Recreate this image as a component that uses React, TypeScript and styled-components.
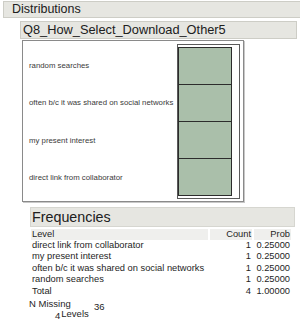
import React from 'react'
import styled, { createGlobalStyle } from 'styled-components'

const GlobalStyle = createGlobalStyle`
  html, body {
    margin: 0;
    padding: 0;
    background: #fff;
    overflow: hidden;
  }
  body {
    font-family: 'Liberation Sans', Arial, sans-serif;
    color: #1e1e1e;
  }
`

const levels = [
  { name: 'direct link from collaborator', count: 1, prob: '0.25000' },
  { name: 'my present interest', count: 1, prob: '0.25000' },
  { name: 'often b/c it was shared on social networks', count: 1, prob: '0.25000' },
  { name: 'random searches', count: 1, prob: '0.25000' },
]

const App: React.FC = () => {
  const plotLevels = [...levels].reverse()

  return (
    <Page>
      <GlobalStyle />
      <OutlineHeader>Distributions</OutlineHeader>
      <OutlineBody>
        <SubHeader>Q8_How_Select_Download_Other5</SubHeader>
        <PlotFrame>
          <AxisLabels>
            {plotLevels.map(l => (
              <AxisLabel key={l.name}>{l.name}</AxisLabel>
            ))}
          </AxisLabels>
          <BarBox>
            <BarStack>
              {plotLevels.map(l => (
                <Bar key={l.name} />
              ))}
            </BarStack>
          </BarBox>
        </PlotFrame>

        <FreqSection>
          <FreqHeader>Frequencies</FreqHeader>
          <FreqTable>
            <thead>
              <tr>
                <HeadCell>Level</HeadCell>
                <HeadCell align="right">Count</HeadCell>
                <HeadCell align="right">Prob</HeadCell>
              </tr>
            </thead>
            <tbody>
              {levels.map(l => (
                <tr key={l.name}>
                  <Cell>{l.name}</Cell>
                  <Cell align="right">{l.count}</Cell>
                  <Cell align="right">{l.prob}</Cell>
                </tr>
              ))}
              <tr>
                <Cell>Total</Cell>
                <Cell align="right">4</Cell>
                <Cell align="right">1.00000</Cell>
              </tr>
            </tbody>
          </FreqTable>
          <Summary>
            <SummaryRow>
              <SummaryLabel>N Missing</SummaryLabel>
              <SummaryValue $drop={3}>36</SummaryValue>
            </SummaryRow>
            <SummaryRow $indent={26}>
              <SummaryValue $drop={2}>4</SummaryValue>
              <span>Levels</span>
            </SummaryRow>
          </Summary>
        </FreqSection>
      </OutlineBody>
    </Page>
  )
}

export default App

const Page = styled.div`
  width: 300px;
  height: 324px;
  padding: 1px 0 0 3px;
  box-sizing: border-box;
`
const OutlineHeader = styled.div`
  width: 305px;
  height: 17px;
  box-sizing: border-box;
  background: #e6e6e1;
  border: 1px solid #cdcdc6;
  padding-left: 8px;
  font-size: 12.5px;
  line-height: 15px;
  color: #202020;
`
const OutlineBody = styled.div`
  margin-top: 3px;
  padding-left: 17px;
`
const SubHeader = styled.div`
  width: 277px;
  height: 18px;
  box-sizing: border-box;
  background: #e6e6e1;
  border: 1px solid #cdcdc6;
  padding-left: 2px;
  font-size: 12.8px;
  line-height: 16px;
  color: #202020;
`
const PlotFrame = styled.div`
  margin: 1px 0 0 2px;
  width: 222px;
  height: 162px;
  box-sizing: border-box;
  border: 1px solid #8a8a8a;
  box-shadow: 1px 1px 0 #c8c8c8;
  display: flex;
  padding: 3px 3px 2px 0;
`
const AxisLabels = styled.div`
  flex: 1;
  display: flex;
  flex-direction: column;
  padding: 3px 0 3px 6px;
`
const AxisLabel = styled.div`
  flex: 1;
  display: flex;
  align-items: center;
  font-size: 7.8px;
  color: #3a3a3a;
  white-space: nowrap;
`
const BarBox = styled.div`
  width: 63px;
  box-sizing: border-box;
  border: 1px solid #5a5a5a;
  padding: 2px 7px 2px 0;
  display: flex;
`
const BarStack = styled.div`
  flex: 1;
  display: flex;
  flex-direction: column;
  border: 1px solid #2c2c2c;
  border-bottom: none;
`
const Bar = styled.div`
  flex: 1;
  background: #aabfaa;
  border-bottom: 1px solid #2c2c2c;
`
const FreqSection = styled.div`
  margin: 5px 0 0 10px;
`
const FreqHeader = styled.div`
  width: 265px;
  height: 20px;
  box-sizing: border-box;
  background: #e6e6e1;
  border: 1px solid #d6d6d0;
  padding-left: 1px;
  font-size: 14.3px;
  line-height: 18px;
  color: #202020;
`
const FreqTable = styled.table`
  margin: 2px 0 0 -1px;
  border-collapse: separate;
  border-spacing: 2px 0;
  font-size: 9.3px;
  color: #1e1e1e;
  table-layout: fixed;
  width: 262px;

  td:nth-child(1), th:nth-child(1) { width: 175px; }
  td:nth-child(2), th:nth-child(2) { width: 40px; }
  td:nth-child(3), th:nth-child(3) { width: 35px; }
`
const HeadCell = styled.th<{ align?: string }>`
  background: #efefed;
  font-weight: normal;
  text-align: ${p => p.align || 'left'};
  padding: 0 1px;
  height: 11px;
  line-height: 11px;
  white-space: nowrap;
`
const Cell = styled.td<{ align?: string }>`
  text-align: ${p => p.align || 'left'};
  padding: 0 1px;
  height: 11.4px;
  line-height: 11.4px;
  white-space: nowrap;
`
const Summary = styled.div`
  margin: 2px 0 0 -1px;
  font-size: 9.5px;
  color: #1e1e1e;
`
const SummaryRow = styled.div<{ $indent?: number }>`
  display: flex;
  align-items: flex-start;
  height: 10px;
  line-height: 10px;
  padding-left: ${p => p.$indent || 0}px;
`
const SummaryLabel = styled.span`
  width: 65px;
`
const SummaryValue = styled.span<{ $drop?: number }>`
  margin-top: ${p => p.$drop || 0}px;
  margin-right: 1px;
`
